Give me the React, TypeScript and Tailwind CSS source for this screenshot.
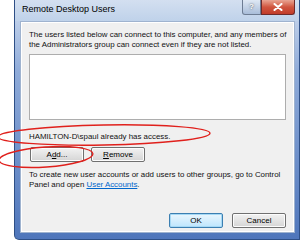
import React from "react";

const font = { fontFamily: '"Liberation Sans", Arial, sans-serif' };

function Btn({ children, def }: { children: React.ReactNode; def?: boolean }) {
  return (
    <div
      className={
        "w-[54px] h-[15px] rounded-[2px] flex items-center justify-center text-[8px] text-black " +
        (def
          ? "border border-[#3c7fb1] bg-gradient-to-b from-[#eaf6fd] to-[#bee6fd] shadow-[inset_0_0_0_1px_#a6d9f5]"
          : "border border-[#707070] bg-gradient-to-b from-[#f2f2f2] to-[#d5d5d5] shadow-[inset_0_0_0_1px_#fcfcfc]")
      }
    >
      {children}
    </div>
  );
}

export default function App() {
  return (
    <div className="w-[300px] h-[242px] bg-white relative overflow-hidden" style={font}>
      <div className="ml-[14px] w-[286px] h-[240px] flex flex-col rounded-bl-[5px] bg-gradient-to-b from-[#cfdcef] via-[#8fabd9] via-30% to-[#4f76bb] border-l border-b border-r border-[#2e4f86] pl-[5px] pr-[4px] pb-[6px]">
        <div className="h-[21px] flex items-start shrink-0 -ml-[5px] -mr-[4px] bg-gradient-to-b from-[#d3dff0] to-[#bfd2ea]">
          <div className="pl-[7px] pt-[5px] text-[9px] text-black leading-none">Remote Desktop Users</div>
          <div className="ml-auto flex mr-[4px]">
            <div className="w-[19px] h-[15px] rounded-bl-[3px] border border-t-0 border-[#6d7c93] bg-gradient-to-b from-[#dfe8f4] to-[#a9bdd9] flex items-center justify-center text-[8px] text-white font-bold" style={{ textShadow: "0 0 2px #333" }}>?</div>
            <div className="w-[34px] h-[15px] rounded-br-[3px] border border-t-0 border-[#6e2a2a] bg-gradient-to-b from-[#e8a493] via-[#d0553f] to-[#c13b2a] flex items-center justify-center">
              <svg width="10" height="8" viewBox="0 0 10 8">
                <path d="M1.5 1 L8.5 7 M8.5 1 L1.5 7" stroke="#fff" strokeWidth="2" strokeLinecap="round" />
              </svg>
            </div>
          </div>
        </div>
        <div className="flex-1 bg-[#f0f0f0] border border-[#9fb3cf] shadow-[inset_0_0_0_1px_#ffffff] flex flex-col px-[8px] text-[7.9px] leading-[10px] text-[#111] whitespace-nowrap">
          <div className="mt-[8px]">
            The users listed below can connect to this computer, and any members of
            <br />
            the Administrators group can connect even if they are not listed.
          </div>
          <div className="mt-[4px] h-[66px] bg-white border border-[#adadad]" />
          <div className="mt-[12px]">HAMILTON-D\spaul already has access.</div>
          <div className="mt-[5px] flex gap-[7px] pl-[1px]">
            <Btn>
              A<span className="underline">d</span>d...
            </Btn>
            <Btn>
              <span className="underline">R</span>emove
            </Btn>
          </div>
          <div className="mt-[8px]">
            To create new user accounts or add users to other groups, go to Control
            <br />
            Panel and open <span className="text-[#0066cc] underline">User Accounts</span>.
          </div>
          <div className="mt-auto mb-[4px] flex justify-end gap-[9px]">
            <Btn def>OK</Btn>
            <Btn>Cancel</Btn>
          </div>
        </div>
      </div>
      <svg className="absolute left-0 top-0 pointer-events-none" width="300" height="242">
        <ellipse cx="104" cy="135" rx="106" ry="10" fill="none" stroke="#e0201c" strokeWidth="1.4" transform="rotate(-1 104 135)" />
        <ellipse cx="46" cy="157" rx="47" ry="10" fill="none" stroke="#e0201c" strokeWidth="1.4" transform="rotate(-4 46 157)" />
      </svg>
    </div>
  );
}
